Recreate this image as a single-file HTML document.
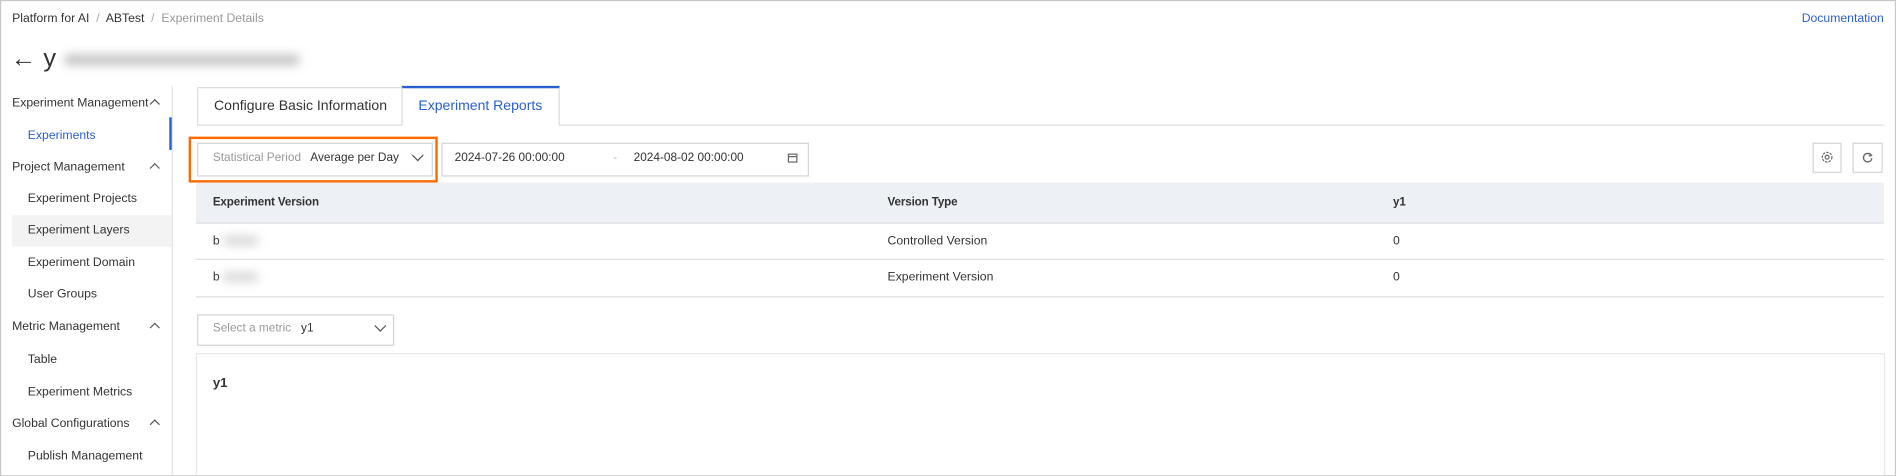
<!DOCTYPE html>
<html><head><meta charset="utf-8"><style>
html,body{margin:0;padding:0;width:1896px;height:476px;overflow:hidden;background:#fff}
#w{position:absolute;left:0;top:0;width:1568px;height:394px;overflow:hidden;transform:scale(1.2092);transform-origin:0 0;font-family:"Liberation Sans",sans-serif;font-size:10.1px;color:#333;box-sizing:border-box;border:1px solid #c8c8c8}
.a{position:absolute;white-space:nowrap;line-height:14px}
.box{position:absolute;box-sizing:border-box;border:1px solid #d4d4d4;background:#fff}
.b{font-weight:bold;font-size:9.6px;letter-spacing:-0.1px}
.hl{position:absolute;height:1px;background:#dedede}
.car{position:absolute;width:5px;height:5px;border-left:1.2px solid #555;border-top:1.2px solid #555;transform:rotate(45deg)}
.dn{position:absolute;width:6px;height:6px;border-right:1.2px solid #555;border-bottom:1.2px solid #555;transform:rotate(45deg)}
.blur{position:absolute;background:#bbb;filter:blur(4px);border-radius:4px}
</style></head><body><div id="w">
<div class="a" style="left:9px;top:8px">Platform for AI <span style="color:#aaa">&nbsp;/&nbsp;</span> ABTest <span style="color:#aaa">&nbsp;/&nbsp;</span> <span style="color:#999">Experiment Details</span></div>
<div class="a" style="left:1489px;top:8px;color:#2a5fd0">Documentation</div>
<div class="a" style="left:8px;top:36px;font-size:21px;line-height:24px">← y</div>
<div class="blur" style="left:52px;top:44px;width:195px;height:9px;background:#c4c4c4"></div>

<div style="position:absolute;left:141px;top:70px;width:1px;height:324px;background:#e3e3e3"></div>
<div class="a" style="left:9px;top:78px">Experiment Management</div><div class="car" style="left:124px;top:82px"></div>
<div class="a" style="left:22px;top:105px;color:#2a5fd0">Experiments</div>
<div style="position:absolute;left:139px;top:96px;width:2px;height:27px;background:#2a5fd0"></div>
<div class="a" style="left:9px;top:131px">Project Management</div><div class="car" style="left:124px;top:135px"></div>
<div class="a" style="left:22px;top:157px">Experiment Projects</div>
<div style="position:absolute;left:9px;top:177px;width:132px;height:26px;background:#f3f3f3"></div>
<div class="a" style="left:22px;top:183px">Experiment Layers</div>
<div class="a" style="left:22px;top:210px">Experiment Domain</div>
<div class="a" style="left:22px;top:236px">User Groups</div>
<div class="a" style="left:9px;top:263px">Metric Management</div><div class="car" style="left:124px;top:267px"></div>
<div class="a" style="left:22px;top:290px">Table</div>
<div class="a" style="left:22px;top:317px">Experiment Metrics</div>
<div class="a" style="left:9px;top:343px">Global Configurations</div><div class="car" style="left:124px;top:347px"></div>
<div class="a" style="left:22px;top:370px">Publish Management</div>

<div class="box" style="left:162px;top:71px;width:170px;height:32px;border-color:#dcdcdc;background:#fff"></div>
<div class="a" style="left:176px;top:80px;font-size:11.6px">Configure Basic Information</div>
<div class="box" style="left:331px;top:70px;width:131px;height:33px;border-color:#dcdcdc;border-top:2px solid #2a5fd0;border-bottom:none"></div>
<div class="a" style="left:345px;top:80px;font-size:11.6px;color:#2a5fd0">Experiment Reports</div>
<div class="hl" style="left:462px;top:102px;width:1095px"></div>

<div style="position:absolute;left:155px;top:112px;width:206px;height:38px;box-sizing:border-box;border:2px solid #ff6a00"></div>
<div class="box" style="left:162px;top:117px;width:195px;height:28px"></div>
<div class="a" style="left:175px;top:123px;font-size:9.8px"><span style="color:#999">Statistical Period</span>&nbsp;&nbsp; Average per Day</div>
<div class="dn" style="left:341px;top:124px"></div>
<div class="box" style="left:364px;top:117px;width:304px;height:28px"></div>
<div class="a" style="left:375px;top:123px;font-size:9.8px">2024-07-26 00:00:00</div>
<div class="a" style="left:506px;top:123px;font-size:9.8px;color:#bbb">-</div>
<div class="a" style="left:523px;top:123px;font-size:9.8px">2024-08-02 00:00:00</div>
<svg style="position:absolute;left:650px;top:125px" width="9" height="9" viewBox="0 0 9 9"><rect x="1" y="1.5" width="7" height="6.5" fill="none" stroke="#666"/><line x1="1" y1="3.5" x2="8" y2="3.5" stroke="#666"/></svg>
<div class="box" style="left:1498px;top:117px;width:24px;height:25px"></div>
<svg style="position:absolute;left:1504px;top:123px" width="12" height="12" viewBox="0 0 12 12"><circle cx="6" cy="6" r="4" fill="none" stroke="#666" stroke-width="1" stroke-dasharray="2 1"/><circle cx="6" cy="6" r="1.6" fill="none" stroke="#666"/></svg>
<div class="box" style="left:1531px;top:117px;width:25px;height:25px"></div>
<svg style="position:absolute;left:1538px;top:124px" width="11" height="11" viewBox="0 0 11 11"><path d="M8.5 3.5A3.5 3.5 0 1 0 9 6" fill="none" stroke="#666" stroke-width="1.1"/><path d="M7 1.5L8.8 3.6 6.5 4" fill="none" stroke="#666"/></svg>

<div style="position:absolute;left:161px;top:150px;width:1396px;height:33px;background:#edf0f5"></div>
<div class="a b" style="left:175px;top:160px">Experiment Version</div>
<div class="a b" style="left:733px;top:160px">Version Type</div>
<div class="a b" style="left:1151px;top:160px">y1</div>
<div class="hl" style="left:161px;top:183px;width:1396px"></div>
<div class="a" style="left:175px;top:192px">b</div>
<div class="blur" style="left:183px;top:194px;width:30px;height:8px;background:#d8d8d8"></div>
<div class="a" style="left:733px;top:192px">Controlled Version</div>
<div class="a" style="left:1151px;top:192px">0</div>
<div class="hl" style="left:161px;top:213px;width:1396px"></div>
<div class="a" style="left:175px;top:222px">b</div>
<div class="blur" style="left:183px;top:224px;width:30px;height:8px;background:#d8d8d8"></div>
<div class="a" style="left:733px;top:222px">Experiment Version</div>
<div class="a" style="left:1151px;top:222px">0</div>
<div class="hl" style="left:161px;top:244px;width:1396px"></div>

<div class="box" style="left:162px;top:259px;width:163px;height:26px"></div>
<div class="a" style="left:175px;top:264px;font-size:9.8px"><span style="color:#999">Select a metric</span>&nbsp;&nbsp; y1</div>
<div class="dn" style="left:310px;top:265px"></div>
<div class="box" style="left:161px;top:291px;width:1397px;height:110px;border-color:#e6e6e6"></div>
<div class="a b" style="left:175px;top:309px;font-size:11px">y1</div>
</div></body></html>
